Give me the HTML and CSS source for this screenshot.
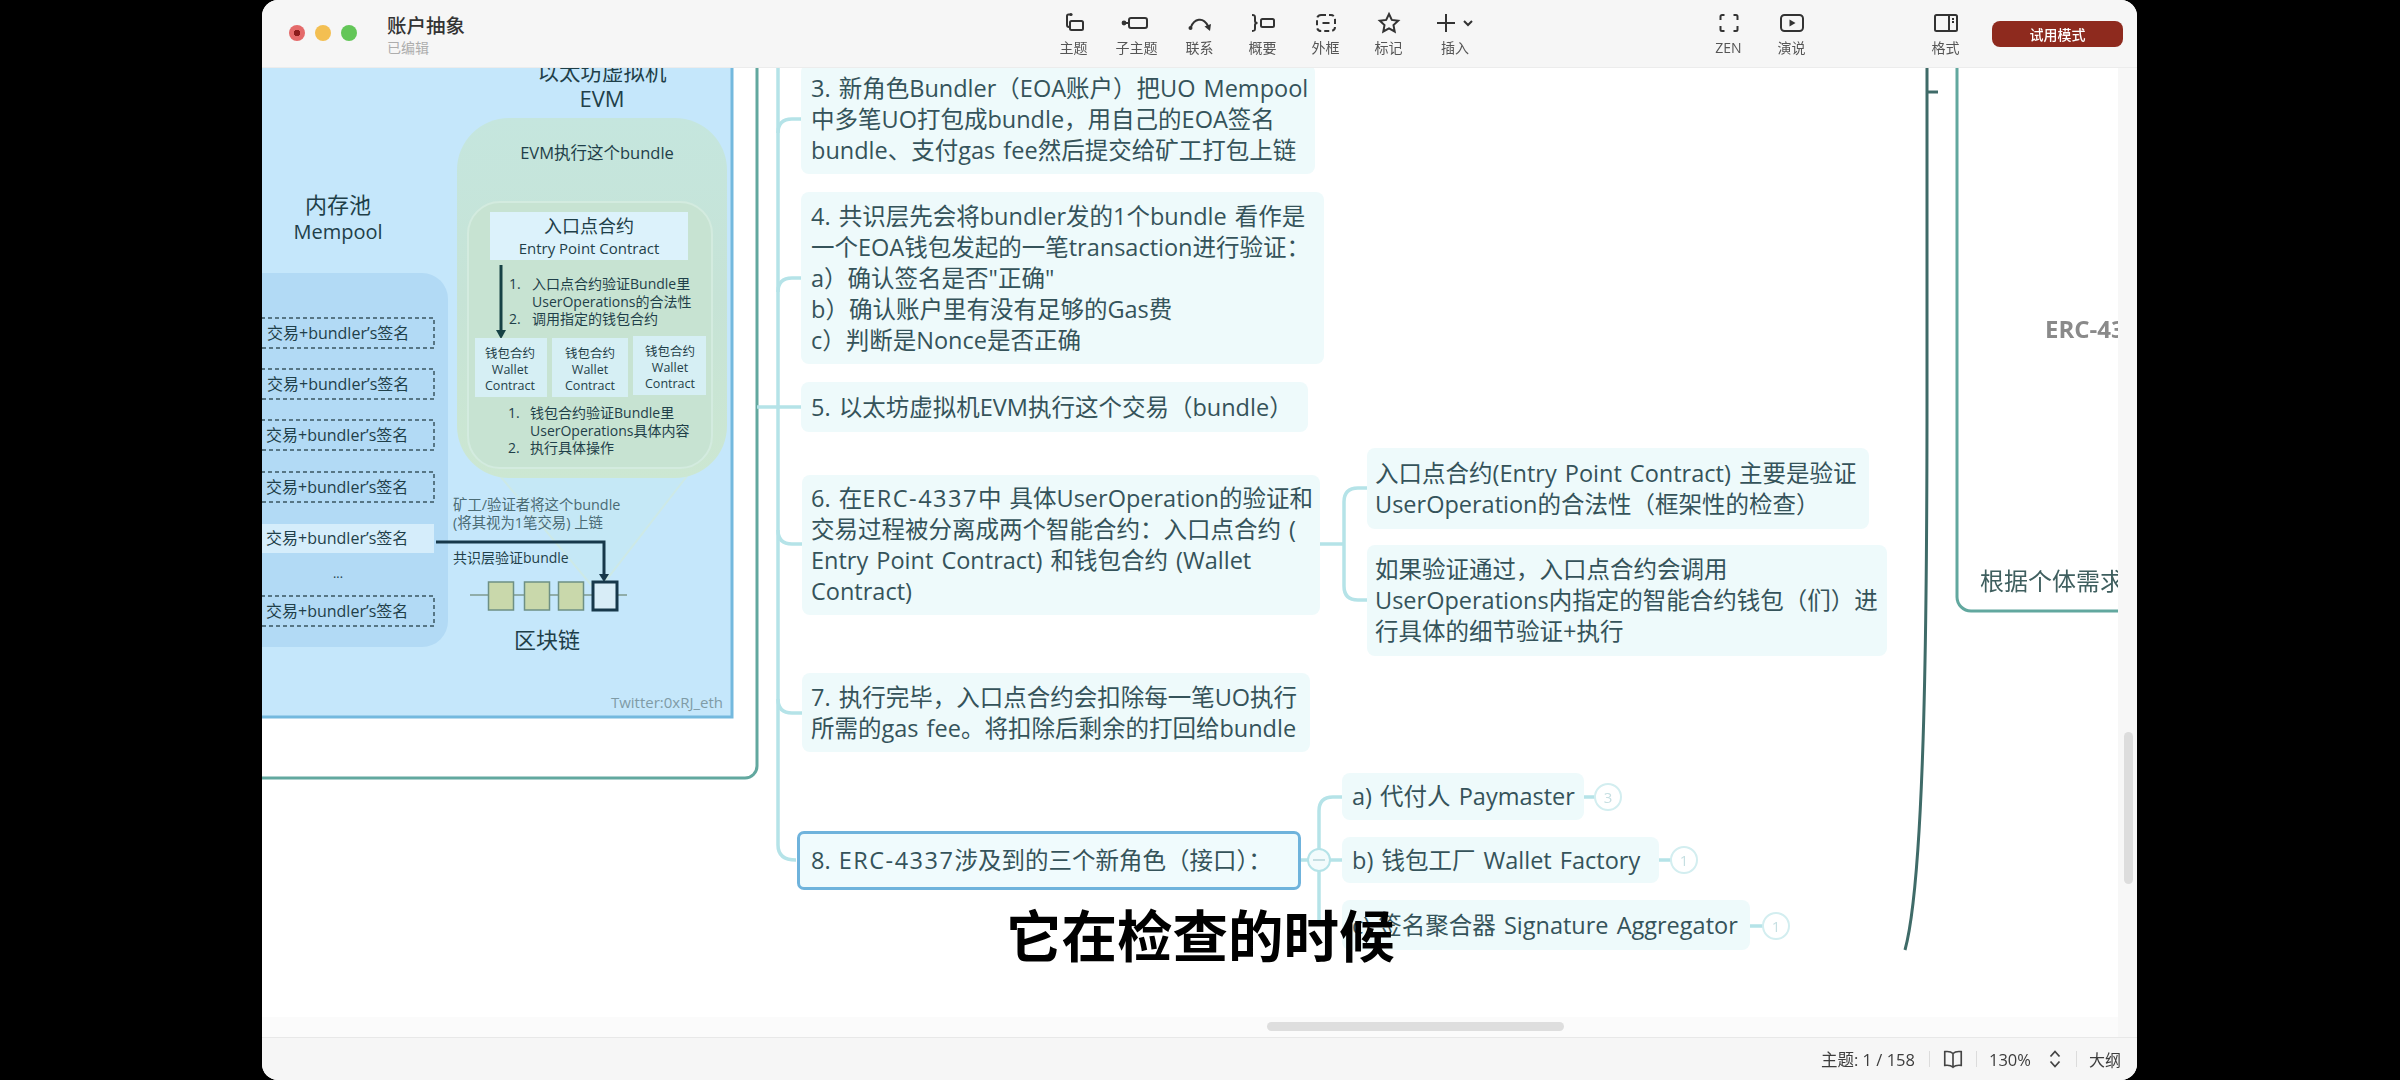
FILE: index.html
```html
<!DOCTYPE html>
<html lang="zh-CN">
<head>
<meta charset="utf-8">
<title>账户抽象</title>
<link rel="stylesheet" href="styles.css">
</head>
<body>
<div class="window">
  <header class="toolbar">
    <div class="tb-left">
      <div class="lights"><span class="light red"></span><span class="light yellow"></span><span class="light green"></span></div>
      <div class="doc"><div class="doc-title">账户抽象</div><div class="doc-sub">已编辑</div></div>
    </div>
    <div class="tool"><svg class="ico" viewBox="0 0 24 24"><circle cx="9" cy="3.5" r="1.6" class="fill"/><path d="M9 3.5H6.5A1.5 1.5 0 0 0 5 5v9a2 2 0 0 0 2 2"/><rect x="8" y="10" width="13" height="9" rx="1.5"/></svg><span>主题</span></div>
    <div class="tool"><svg class="ico" viewBox="0 0 24 24"><circle cx="-1" cy="12" r="2.4" class="fill"/><path d="M0 12h4"/><rect x="4" y="7" width="18" height="10" rx="2"/></svg><span>子主题</span></div>
    <div class="tool"><svg class="ico" viewBox="0 0 24 24"><circle cx="2.5" cy="17" r="2" class="fill"/><path d="M3 16C6 8 15 5 20 15"/><path d="M16.500 15.500 22 20l1-7z" class="fill"/></svg><span>联系</span></div>
    <div class="tool"><svg class="ico" viewBox="0 0 24 24"><path d="M1 4c3 0 3 1 3 3v3c0 1.500 1 2 2.500 2C5 12 4 12.500 4 14v3c0 2 0 3-3 3"/><rect x="10" y="8" width="13" height="8" rx="1.500"/></svg><span>概要</span></div>
    <div class="tool"><svg class="ico" viewBox="0 0 24 24"><rect x="3" y="4" width="18" height="16" rx="4" class="dash"/><path d="M8.500 12h7"/></svg><span>外框</span></div>
    <div class="tool"><svg class="ico" viewBox="0 0 24 24"><path d="M12 3l2.800 5.900 6.400.800-4.700 4.400 1.200 6.400L12 17.400l-5.700 3.100 1.200-6.400-4.700-4.400 6.400-.800z"/></svg><span>标记</span></div>
    <div class="tool tool-wide"><svg class="ico ico-wide" viewBox="0 0 40 24"><path d="M11 3v18M2 12h18"/><path d="M29 10l4 4 4-4"/></svg><span>插入</span></div>
    <div class="tool gap-a"><svg class="ico" viewBox="0 0 24 24"><path d="M7.500 4H5a1.500 1.500 0 0 0-1.500 1.500V9M16.500 4H19a1.500 1.500 0 0 1 1.500 1.500V9M7.500 20H5a1.500 1.500 0 0 1-1.500-1.500V15M16.500 20H19a1.500 1.500 0 0 0 1.500-1.500V15"/></svg><span>ZEN</span></div>
    <div class="tool"><svg class="ico" viewBox="0 0 24 24"><rect x="1" y="4" width="22" height="16" rx="3.500"/><path d="M9.500 8.500l6 3.500-6 3.500z" class="fill"/></svg><span>演说</span></div>
    <div class="tool gap-b"><svg class="ico" viewBox="0 0 24 24"><rect x="1" y="4" width="22" height="16" rx="1.500"/><path d="M15 4v16M18 8h2M18 11h2"/></svg><span>格式</span></div>
    <button class="trial">试用模式</button>
  </header>

  <div class="workspace">
    <div class="main-col">
      <main class="canvas">
        <svg class="art" viewBox="0 0 1856 949" width="1856" height="949">
          <defs>
            <linearGradient id="gGreen" x1="0" y1="0" x2="0" y2="1"><stop offset="0" stop-color="#c5e6de"/><stop offset="0.5" stop-color="#c6e3d6"/><stop offset="1" stop-color="#cce7d2"/></linearGradient>
          </defs>
          <g transform="translate(-262 -68)">
            <!-- outer boundary -->
            <path d="M200 778H745a12 12 0 0 0 12-12V60" class="bound"/>
            <path d="M1957 60V597a14 14 0 0 0 14 14H2130" class="bound"/>
            <path d="M1927 60V400C1927 640 1924 880 1905 950" class="dark-line"/>
            <path d="M1927 92H1938" class="dark-line"/>

            <!-- picture -->
            <rect x="240" y="40" width="492" height="677" fill="#c5e7fb" stroke="#74b9de" stroke-width="3"/>
            <path d="M470 440 L597 592 L715 440Z" fill="#c5e8f6" stroke="#cde9e6" stroke-width="2"/>
            <rect x="457" y="118" width="270" height="360" rx="52" fill="url(#gGreen)"/>
            <rect x="468" y="202" width="244" height="266" rx="32" fill="#c7e3d2" stroke="#d3ebdf" stroke-width="2"/>
            <text x="602" y="80" class="t t215 mid">以太坊虚拟机</text>
            <text x="602" y="107" class="t t22 mid">EVM</text>
            <text x="597" y="159" class="t t165 mid">EVM执行这个bundle</text>
            <rect x="490" y="212" width="198" height="48" fill="#dcf2fb"/>
            <text x="589" y="233" class="t t18 mid">入口点合约</text>
            <text x="589" y="254" class="t t15 mid">Entry Point Contract</text>
            <path d="M501 265V332" stroke="#174245" stroke-width="3"/>
            <path d="M496 330h10l-5 9z" fill="#174245"/>
            <text x="509" y="289" class="t t14">1.</text>
            <text x="532" y="289" class="t t14">入口点合约验证Bundle里</text>
            <text x="532" y="307" class="t t14">UserOperations的合法性</text>
            <text x="509" y="324" class="t t14">2.</text>
            <text x="532" y="324" class="t t14">调用指定的钱包合约</text>
            <rect x="475" y="338" width="72" height="59" fill="#d6eff4"/>
            <rect x="552" y="338" width="76" height="59" fill="#d6eff4"/>
            <rect x="633" y="336" width="73" height="59" fill="#d6eff4"/>
            <text x="510" y="358" class="t t13 mid">钱包合约</text><text x="510" y="374" class="t t13 mid">Wallet</text><text x="510" y="390" class="t t13 mid">Contract</text>
            <text x="590" y="358" class="t t13 mid">钱包合约</text><text x="590" y="374" class="t t13 mid">Wallet</text><text x="590" y="390" class="t t13 mid">Contract</text>
            <text x="670" y="356" class="t t13 mid">钱包合约</text><text x="670" y="372" class="t t13 mid">Wallet</text><text x="670" y="388" class="t t13 mid">Contract</text>
            <text x="508" y="418" class="t t14">1.</text>
            <text x="530" y="418" class="t t14">钱包合约验证Bundle里</text>
            <text x="530" y="436" class="t t14">UserOperations具体内容</text>
            <text x="508" y="453" class="t t14">2.</text>
            <text x="530" y="453" class="t t14">执行具体操作</text>

            <text x="338" y="213" class="t t22 mid">内存池</text>
            <text x="338" y="239" class="t t20 mid">Mempool</text>
            <rect x="220" y="273" width="228" height="374" rx="26" fill="#b2daf5"/>
            <rect x="240" y="318" width="194" height="30" class="dashed"/>
            <rect x="240" y="369" width="194" height="30" class="dashed"/>
            <rect x="240" y="420" width="194" height="30" class="dashed"/>
            <rect x="240" y="472" width="194" height="30" class="dashed"/>
            <rect x="240" y="524" width="194" height="29" fill="#d5edfb"/>
            <rect x="240" y="596" width="194" height="30" class="dashed"/>
            <text x="267" y="339" class="t t16">交易+bundler’s签名</text>
            <text x="267" y="390" class="t t16">交易+bundler’s签名</text>
            <text x="266" y="441" class="t t16">交易+bundler’s签名</text>
            <text x="266" y="493" class="t t16">交易+bundler’s签名</text>
            <text x="266" y="544" class="t t16">交易+bundler’s签名</text>
            <text x="338" y="578" class="t t13 mid">...</text>
            <text x="266" y="617" class="t t16">交易+bundler’s签名</text>

            <text x="453" y="510" class="t t145 soft">矿工/验证者将这个bundle</text>
            <text x="453" y="528" class="t t145 soft">(将其视为1笔交易) 上链</text>
            <text x="453" y="563" class="t t14">共识层验证bundle</text>
            <path d="M470 595H627" stroke="#7e9a8e" stroke-width="1.500"/>
            <rect x="488.500" y="582" width="25" height="28" class="blk"/>
            <rect x="524.500" y="582" width="25" height="28" class="blk"/>
            <rect x="558.500" y="582" width="25" height="28" class="blk"/>
            <rect x="593" y="582" width="24" height="28" fill="#d8edf7" stroke="#17384a" stroke-width="3"/>
            <path d="M436 542H604V574" fill="none" stroke="#17384a" stroke-width="3"/>
            <path d="M599 574h10l-5 8z" fill="#17384a"/>
            <text x="547" y="648" class="t t22 mid">区块链</text>
            <text x="723" y="708" class="t t15 end tw">Twitter:0xRJ_eth</text>

            <!-- connectors -->
            <path d="M778 60V845Q778 860 796 860" class="con"/>
            <path d="M778 133Q778 119 792 119H803M778 292Q778 278 792 278H803M757 407H803M778 530Q778 544 792 544H803M778 699Q778 713 792 713H803" class="con"/>
            <path d="M1320 544H1344M1367 488H1358Q1344 488 1344 502V586Q1344 600 1358 600H1367" class="con"/>
            <path d="M1342 797H1333Q1319 797 1319 811V926M1301 860H1342" class="con"/>
            <path d="M1584 797H1595M1659 860H1671M1750 926H1763" class="con"/>
            <circle cx="1319" cy="860" r="11" fill="#f2fbfc" stroke="#b5e3e8" stroke-width="2"/>
            <path d="M1313 860H1325" stroke="#b5d5da" stroke-width="1.500"/>
          </g>
        </svg>

        <div class="node n3"><p>3. 新角色Bundler（EOA账户）把UO Mempool<br>中多笔UO打包成bundle，用自己的EOA签名<br>bundle、支付gas fee然后提交给矿工打包上链</p></div>
        <div class="node n4"><p>4. 共识层先会将bundler发的1个bundle 看作是<br>一个EOA钱包发起的一笔transaction进行验证：<br>a）确认签名是否"正确"<br>b）确认账户里有没有足够的Gas费<br>c）判断是Nonce是否正确</p></div>
        <div class="node n5"><p>5. 以太坊虚拟机EVM执行这个交易（bundle）</p></div>
        <div class="node n6"><p>6. 在<span class="erc">ERC-4337</span>中 具体UserOperation的验证和<br>交易过程被分离成两个智能合约：入口点合约 (<br>Entry Point Contract) 和钱包合约 (Wallet<br>Contract)</p></div>
        <div class="node n6a"><p>入口点合约(Entry Point Contract) 主要是验证<br>UserOperation的合法性（框架性的检查）</p></div>
        <div class="node n6b"><p>如果验证通过，入口点合约会调用<br>UserOperations内指定的智能合约钱包（们）进<br>行具体的细节验证+执行</p></div>
        <div class="node n7"><p>7. 执行完毕，入口点合约会扣除每一笔UO执行<br>所需的gas fee。将扣除后剩余的打回给bundle</p></div>
        <div class="node n8"><p>8. <span class="erc">ERC-4337</span>涉及到的三个新角色（接口）：</p></div>
        <div class="node na"><p>a) 代付人 Paymaster</p></div>
        <div class="node nb"><p>b) 钱包工厂 Wallet Factory</p></div>
        <div class="node nc"><p>c) 签名聚合器 Signature Aggregator</p></div>
        <div class="badge ba">3</div>
        <div class="badge bb">1</div>
        <div class="badge bc">1</div>
        <div class="far-title">ERC-4337</div>
        <div class="far-note">根据个体需求定制</div>
        <div class="caption">它在检查的时候</div>
      </main>
      <div class="hstrip"><div class="hthumb"></div></div>
    </div>
    <aside class="gutter"><div class="vthumb"></div></aside>
  </div>

  <footer class="statusbar">
    <span class="st-count">主题: 1 / 158</span>
    <i class="sep"></i>
    <svg class="book" viewBox="0 0 24 24"><path d="M12 6C10 4 7 3.500 3 4v15c4-.500 7 0 9 2 2-2 5-2.500 9-2V4c-4-.500-7 0-9 2zM12 6v15"/></svg>
    <i class="sep"></i>
    <span class="st-zoom">130%</span>
    <svg class="updown" viewBox="0 0 12 20"><path d="M1.500 7.500 6 2.500l4.500 5M1.500 12.500 6 17.500l4.500-5"/></svg>
    <i class="sep"></i>
    <span class="st-outline">大纲</span>
  </footer>
</div>
</body>
</html>
```
FILE: styles.css
```css
* { box-sizing: border-box; }
html, body { margin: 0; height: 100%; background: #000; overflow: hidden; }
body {
  font-family: "Open Sans", "Noto Sans CJK SC", sans-serif;
  padding-left: 262px;
}
.window {
  width: 1875px;
  height: 1080px;
  background: #f6f6f6;
  border-radius: 16px;
  overflow: hidden;
  display: flex;
  flex-direction: column;
  color: #35535a;
  filter: blur(0.5px);
}

/* toolbar */
.toolbar {
  height: 68px;
  flex: none;
  display: flex;
  align-items: flex-start;
  background: #f6f6f6;
  border-bottom: 1px solid #ececec;
}
.tb-left { width: 780px; display: flex; padding: 14px 0 0 27px; flex: none; }
.lights { display: flex; gap: 10px; padding-top: 11px; }
.light { width: 16px; height: 16px; border-radius: 50%; display: block; }
.red { background: radial-gradient(circle, #8c1c1c 0 3px, #e46a6a 3.500px); }
.yellow { background: #f3bf52; }
.green { background: #63c658; }
.doc { margin-left: 30px; }
.doc-title { font-size: 19.500px; line-height: 24px; color: #333; font-weight: 500; }
.doc-sub { font-size: 14px; line-height: 20px; color: #adadad; margin-top: 0; }
.tool {
  width: 63px;
  flex: none;
  display: flex;
  flex-direction: column;
  align-items: center;
  padding-top: 11px;
  font-size: 14px;
  line-height: 20px;
  color: #555;
}
.tool span { margin-top: 3px; }
.tool-wide { width: 70px; }
.gap-a { margin-left: 207px; }
.gap-b { margin-left: 91px; }
.ico { width: 24px; height: 24px; fill: none; stroke: #333; stroke-width: 2; overflow: visible; }
.ico-wide { width: 40px; }
.ico .fill { fill: #333; stroke: none; }
.ico .dash { stroke-dasharray: 5 3; }
.trial {
  margin: 21px 0 0 15px;
  width: 131px;
  height: 26px;
  flex: none;
  border: 0;
  border-radius: 8px;
  background: #8e2a1e;
  color: #fff;
  font: 500 14px "Noto Sans CJK SC", sans-serif;
  padding: 0;
}

/* workspace */
.workspace { flex: none; height: 969px; display: flex; }
.main-col { width: 1856px; flex: none; display: flex; flex-direction: column; }
.canvas { height: 949px; flex: none; position: relative; overflow: hidden; background: #fff; }
.art { position: absolute; left: 0; top: 0; }
.hstrip { height: 20px; flex: none; background: #fbfbfb; padding: 5px 0 0 1005px; }
.hthumb { width: 297px; height: 9px; border-radius: 5px; background: #dedede; }
.gutter { flex: 1; background: #f7f7f7; padding: 664px 0 0 6px; }
.vthumb { width: 9px; height: 152px; border-radius: 5px; background: #dddddd; }

/* diagram text */
.t { font-family: "Open Sans", "Noto Sans CJK SC", sans-serif; fill: #1f3f49; }
.t13 { font-size: 12.500px; }
.t14 { font-size: 14px; }
.t145 { font-size: 14.400px; }
.t15 { font-size: 15px; }
.t16 { font-size: 16px; }
.t165 { font-size: 16.500px; }
.t18 { font-size: 18px; }
.t20 { font-size: 20px; }
.t215 { font-size: 21.500px; }
.t22 { font-size: 22px; }
.mid { text-anchor: middle; }
.end { text-anchor: end; }
.soft { fill: #4b6b74; }
.tw { fill: #7f9ba6; }
.dashed { fill: none; stroke: #3a5560; stroke-width: 1.500; stroke-dasharray: 4 3; }
.blk { fill: #c9d8ab; stroke: #6e9084; stroke-width: 1.500; }
.bound { fill: none; stroke: #62a89f; stroke-width: 3; }
.dark-line { fill: none; stroke: #3f6b68; stroke-width: 3; }
.con { fill: none; stroke: #b5e3e8; stroke-width: 3.500; }

/* nodes */
.node {
  position: absolute;
  display: flex;
  align-items: center;
  padding-left: 10px;
  background: #eefafb;
  border-radius: 8px;
  font-size: 23.500px;
  line-height: 31px;
  word-spacing: 2px;
  color: #35535a;
  white-space: nowrap;
}
.node p { margin: 0; }
.erc { letter-spacing: 1.500px; }
.n3 { left: 539px; top: -4px; width: 514px; height: 110px; }
.n4 { left: 539px; top: 124px; width: 523px; height: 172px; }
.n5 { left: 539px; top: 314px; width: 507px; height: 50px; }
.n6 { left: 540px; top: 407px; width: 518px; height: 140px; padding-left: 9px; }
.n6a { left: 1105px; top: 380px; width: 502px; height: 81px; padding-left: 8px; }
.n6b { left: 1105px; top: 477px; width: 520px; height: 111px; padding-left: 8px; }
.n7 { left: 540px; top: 605px; width: 508px; height: 79px; padding-left: 9px; }
.n8 { left: 535px; top: 763px; width: 504px; height: 59px; border: 3px solid #6fb3dc; border-radius: 7px; background: #f0fbfd; padding-left: 11px; }
.na { left: 1080px; top: 705px; width: 242px; height: 47px; padding-left: 10px; }
.nb { left: 1080px; top: 769px; width: 317px; height: 46px; padding-left: 10px; }
.nc { left: 1080px; top: 832px; width: 408px; height: 50px; padding-left: 10px; }
.badge {
  position: absolute;
  width: 28px;
  height: 28px;
  border: 2px solid #d3eef0;
  border-radius: 50%;
  background: #fff;
  color: #c6dfe2;
  font-size: 15px;
  line-height: 24px;
  text-align: center;
}
.ba { left: 1332px; top: 715px; }
.bb { left: 1408px; top: 778px; }
.bc { left: 1500px; top: 844px; }
.far-title { position: absolute; left: 1783px; top: 244px; font-size: 24px; line-height: 34px; font-weight: 700; color: #8a8a8a; white-space: nowrap; }
.far-note { position: absolute; left: 1718px; top: 496px; font-size: 24px; line-height: 34px; color: #3f5f5f; white-space: nowrap; }
.caption {
  position: absolute;
  left: 744px;
  top: 825px;
  font: 700 55.500px/80px "Noto Sans CJK SC", sans-serif;
  color: #000;
  white-space: nowrap;
}

/* status */
.statusbar {
  flex: none;
  height: 43px;
  display: flex;
  align-items: center;
  border-top: 1px solid #e8e8e8;
  background: #f6f6f6;
  padding-left: 1559px;
  font-size: 16.500px;
  color: #3c3c3c;
}
.st-count { width: 108px; white-space: nowrap; }
.sep { width: 1px; height: 16px; background: #dcdcdc; display: block; flex: none; }
.book { width: 22px; height: 22px; margin: 0 12px; flex: none; fill: none; stroke: #444; stroke-width: 1.800; }
.st-zoom { margin-left: 12px; width: 45px; }
.updown { width: 14px; height: 20px; margin: 0 14px 0 14px; flex: none; fill: none; stroke: #444; stroke-width: 1.800; }
.st-outline { margin-left: 12px; font-size: 16px; }
```
